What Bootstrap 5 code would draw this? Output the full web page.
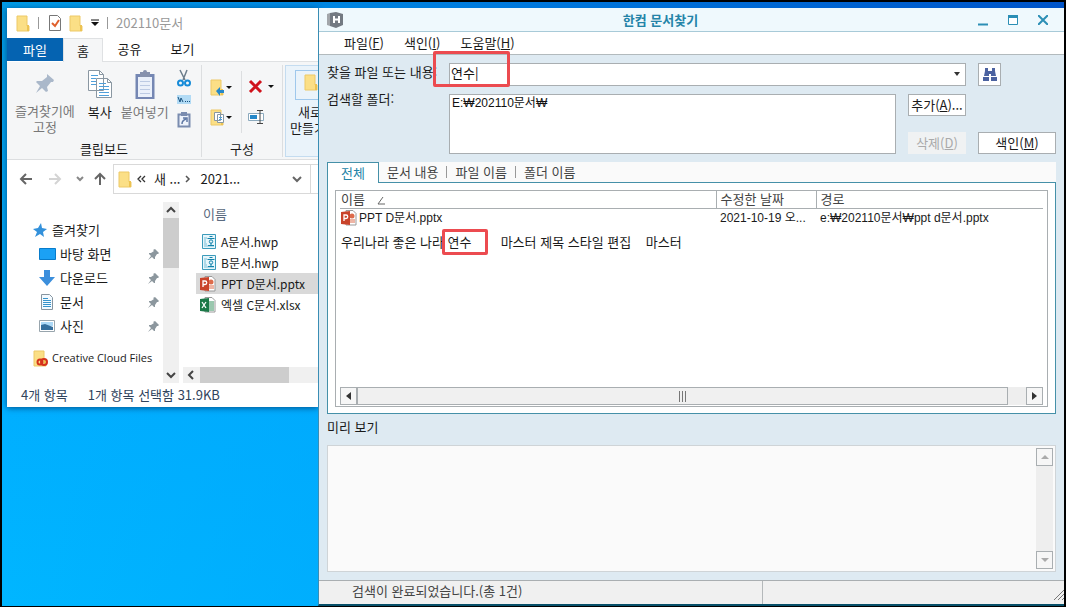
<!DOCTYPE html>
<html lang="ko">
<head>
<meta charset="utf-8">
<meta name="viewport" content="width=device-width, initial-scale=1">
<title>한컴 문서찾기</title>
<link href="https://cdn.jsdelivr.net/npm/bootstrap@5.3.0/dist/css/bootstrap.min.css" rel="stylesheet">
<style>
body{font-family:"Noto Sans CJK KR",sans-serif;font-size:13px;line-height:16px;color:#1a1a1a}
button{font:inherit;color:inherit;background:none;border:0;padding:0}
svg{display:block;flex:none}
a{color:inherit;text-decoration:none}
.desktop{min-height:100vh;border:2px solid #000;border-bottom-width:3px;padding:6px 0 0 5px;
 background:linear-gradient(90deg,#009be6,#0078dc 50%,#0054c8) top/100% 6px no-repeat,linear-gradient(90deg,#00a8fc00,#00a8fc99 32%) no-repeat,linear-gradient(#0096dc,#00aeff 65%,#00b6ff)}
.lt{font-family:"Liberation Sans","Noto Sans CJK KR",sans-serif;font-size:12px}
/* explorer */
.explorer{flex:0 0 311px;height:399px;background:#fff;overflow:hidden;box-shadow:0 1px 6px #00508c}
.qat{height:30px;padding-left:9px;color:#999}
.vbar{width:1px;height:12px;background:#999}
.rtabs{height:24px}
.rtabs button{height:22px}
.rtabs .file{width:56px;height:23px;background:#0563b1;color:#fff}
.rtabs .home{width:40px;height:24px;background:#f5f6f7;border:1px solid #dfe1e3;border-bottom:0}
.rtabs .rest{border-bottom:1px solid #dfe1e3}
.rtabs .rest button{width:53px}
.ribbon{height:98px;background:#f5f6f7;border-bottom:1px solid #dcdee0}
.ribbon .group{border-right:1px solid #dcdee0;height:92px;margin-top:3px}
.ribbon .clip{flex:0 0 195px}
.ribbon .org{flex:0 0 81px}
.ribbon .dim{color:#777}
.orggrid{display:grid;grid-template-columns:31px 36px;grid-auto-rows:16px;row-gap:14px;padding:14px 0 0 8px;align-items:center}
.orggrid .r{border-left:1px solid #dcdee0;padding:8px 0 8px 6px;margin:-8px 0}
.newbox{border:1px solid #c4dcf0;background:#eaf3fa;width:60px;height:92px;margin:3px 0 0 2px}
.newbox span{white-space:nowrap}
.newicon{width:50px;height:30px;border:1px solid #9fc8ec;margin:4px 0 4px 9px;padding:3px 0 0 8px}
.addr{flex:none;height:30px;border:1px solid #d9d9d9;width:198px;white-space:nowrap}
.arrows{padding-left:12px}
.side{width:156px;padding:16px 4px 0 0}
.side a{height:24px}
.side .top-item{padding-left:26px}
.side .sub{padding-left:32px}
.side .cc{font-family:"Open Sans",sans-serif;font-size:11px}
.vscroll{width:16px;height:181px;background:#f0f0f0}
.vscroll i{height:50px;background:#cdcdcd}
.fhead{padding:4px 0 9px 20px;color:#5a6a80}
.files a{height:21px;white-space:nowrap;font-size:12px;padding-left:4px}
.files .rows{padding-left:13px}
.files .sel{background:#d9d9d9}
.hscroll{height:16px;background:#f0f0f0}
.hscroll i{width:89px;height:16px;background:#cdcdcd}
.estat{padding:4px 0 0 14px;color:#30435c}
/* finder */
.finder{background:#deeaf2;border-left:1px solid #3a8db4;border-bottom:2px solid #07506a;min-width:0;min-height:596px}
.titlebar{height:24px;background:#eff9fd;border-bottom:1px solid #a8cad8;color:#2484a8}
.menus{height:23px;background:#fff;border-bottom:1px solid #b2babd;padding-left:25px;gap:20px}
.form{display:grid;grid-template-columns:122px 1fr 58px 90px;padding:8px 8px 0}
.form .row2{margin-top:8px}
.form label{padding-top:1px}
.form .lab2{padding-top:5px}
.bx{background:#fff;border:1px solid #a9aeb1;border-radius:0}
.b22{height:22px}
.off{background:#f0f2f3}
.off:disabled{color:#aaa}
.wide{grid-column:2/4}
.cmb{height:23px;position:relative}
.cmb input{border:0;outline:0;background:none;width:95%;padding:0 0 4px 1px;color:#111}
.findbtn{width:23px}
textarea.bx{height:60px;resize:none;outline:0;padding:0 2px;line-height:16px;color:#111;display:block;overflow:hidden}
.ring{position:absolute;border:3px solid #ec4b50;border-radius:2px;pointer-events:none}
.ring1{left:-17px;top:-13px;width:77px;height:36px}
.ring2{left:-6px;top:-3px;width:46px;height:26px}
.tabstrip{height:21px;background:#fafafa;color:#444}
.tabstrip .fill{border-bottom:1px solid #4590a8}
.tabstrip .on{width:52px;border:1px solid #4590a8;border-bottom:0;background:#fff;color:#2484a8}
.pane{background:#fff;border:1px solid #4590a8;border-top:0;padding:7px;height:231px}
.list{border:1px solid #a9aeb1;height:217px;padding:0 4px 1px}
.list table{width:100%;table-layout:fixed;white-space:nowrap}
.c1{width:376px}.c2{width:100px}
.list th{font-weight:400;color:#444;height:17px;padding:0 0 0 4px;border-bottom:1px solid #a9aeb1}
.list th+th{border-left:1px solid #a9aeb1}
.list td{height:20px;padding:0 0 0 4px}
.list tr>:first-child{padding-left:1px}
.list .snip td{height:28px;white-space:pre}
.sb{height:18px;background:#eee}
.sb button,.pv button{width:17px;height:18px;border:1px solid #a9aeb1;background:#f6f6f6}
.thumb{flex:1;border:1px solid #a9aeb1;margin-right:18px;background:#f0f0f0}
.plabel{padding:5px 0 10px}
.preview{min-height:127px;background:#fafafa;border:1px solid #cfd4d7;padding:2px}
.pv{background:#eee}
.status{height:24px;background:#f0f0f0;border-top:1px solid #a9aeb1;color:#444}
.status span{width:444px;padding:2px 0 0 33px;border-right:1px solid #b4b8ba}
</style>
</head>
<body>
<svg width="0" height="0" class="position-absolute">
<defs>
<g id="folder"><path d="M1 1h10v10h2v5H1z" fill="#fbdf86" stroke="#edc966"/><path d="M11 10h2v6h-2z" fill="#edc352"/></g>
<g id="pin"><path d="M7 0l4 4-1 1-1 0-2 3v2l-1 0-2-2-4 3 3-4-2-2V4h2l3-2-1-1z" fill="#8c979e"/></g>
<g id="hwp"><path d="M.5.5h13v14H.5z" fill="#e7f6fb" stroke="#3c9bbb"/><path d="M2 4h3M2 6h2M2 8h2M2 10h3M2 12h10" stroke="#77bdd6"/><path d="M7.500 2.500h3M5.500 4.500h7" stroke="#1282ab"/><circle cx="9" cy="7.500" r="1.700" fill="none" stroke="#1282ab"/><path d="M9 9v2M6 11.500h6" stroke="#1282ab"/></g>
<g id="ppt"><path d="M5 .5h7l3 3V15H5z" fill="#fff" stroke="#999"/><circle cx="11" cy="6" r="2.500" fill="#dd6b4b"/><path d="M9 10h5M9 12h5" stroke="#dd6b4b"/><path d="M0 2l9-1v14l-9-1z" fill="#c9432a"/><path d="M3 11V5h2a1.500 1.500 0 010 3.500H3" fill="none" stroke="#fff" stroke-width="1.300"/></g>
</defs></svg>
<main class="desktop d-flex align-items-start">
<section class="explorer d-flex flex-column" aria-label="202110문서">
 <div class="qat d-flex align-items-center">
  <svg width="14" height="17"><use href="#folder"/></svg><span class="vbar ms-2"></span>
  <svg class="ms-2 me-1" width="18" height="17"><path d="M2.500.5h8l3 3v12h-11z" fill="#fff" stroke="#777"/><path d="M5 8l3 3 4-6" fill="none" stroke="#e0602c" stroke-width="2"/></svg>
  <svg width="14" height="17"><use href="#folder"/></svg>
  <svg class="ms-2 me-2" width="8" height="8"><path d="M0 1h8" stroke="#111"/><path d="M0 3h8L4 7z" fill="#111"/></svg>
  <span class="vbar me-2"></span><span>202110문서</span>
 </div>
 <div class="rtabs d-flex"><button class="file">파일</button><button class="home">홈</button><div class="rest flex-fill"><button>공유</button><button>보기</button></div></div>
 <div class="ribbon d-flex">
  <div class="group clip d-flex flex-column justify-content-between">
   <div class="d-flex text-center">
    <button class="dim ms-2 pt-2"><svg class="mx-auto mb-2" width="22" height="22" viewBox="0 0 22 22"><path d="M13 1l7 6-1 2-2 0-4 5 1 4-2 1-4-4-6 5 4-7-4-4 1-1 5 0 5-4z" fill="#aab8ca"/></svg>즐겨찾기에<br>고정</button>
    <button class="d-flex flex-column align-items-center pt-1 ms-2 ps-1"><svg class="mb-1" width="26" height="31"><path d="M1.500 1.500h11l4 4v16h-15zM9.500 9.500h11l4 4v15h-15z" fill="#fff" stroke="#8a97a2"/><path d="M12.500 1.500v4h4M20.500 9.500v4h4" fill="none" stroke="#8a97a2"/><path d="M4 6.500h7M4 9.500h5M4 12.500h5M4 15.500h5M12 14.500h7M12 17.500h10M12 20.500h10M12 23.500h10M12 26.500h10" stroke="#4f9fda"/></svg>복사</button>
    <button class="dim d-flex flex-column align-items-center pt-1 ms-2"><svg class="mb-1" width="22" height="31"><rect x="1.500" y="5" width="19" height="25" fill="#7587b3"/><path d="M4 8h14v20H4z" fill="#eaf0fa"/><path d="M6 3h10v5H6z" fill="#8792ad"/><circle cx="11" cy="3" r="2" fill="#8792ad"/><path d="M6 12.500h10M6 16.500h10M6 20.500h10M6 24.500h10" stroke="#bccae3"/></svg>붙여넣기</button>
    <div class="d-flex flex-column align-items-center ms-2 gap-2 pt-1">
     <svg width="14" height="18"><path d="M3 1l5 10M10 1L6 11" stroke="#6b7d8c" stroke-width="1.500"/><circle cx="3.500" cy="14" r="2.500" fill="none" stroke="#168bd8" stroke-width="2"/><circle cx="10.500" cy="14" r="2.500" fill="none" stroke="#168bd8" stroke-width="2"/></svg>
     <svg width="14" height="9"><path d="M0 0h14v9H0z" fill="#b2dbf5"/><path d="M1 2l2 5 1-4 2 4M8 6.500h1M10 6.500h1M12 6.500h1" fill="none" stroke="#195280"/></svg>
     <svg width="14" height="16"><path d="M1.500 2.500h11v12h-11z" fill="#eef3fb" stroke="#7a8caf" stroke-width="2"/><path d="M4 0h6v4H4z" fill="#7a8caf"/><path d="M5 12c0-3 1-4 4-5M6 6h4v4" fill="none" stroke="#6079a5" stroke-width="1.500"/></svg>
    </div>
   </div><div class="text-center">클립보드</div>
  </div>
  <div class="group org d-flex flex-column justify-content-between">
   <div class="orggrid">
    <svg width="24" height="17"><use href="#folder"/><path d="M6 12l4-4v3h4v3h-4v3z" fill="#2688c9"/><path d="M16 7h6l-3 3z" fill="#111"/></svg>
    <div class="r"><svg width="28" height="16"><path d="M2 2l11 11M13 2L2 13" stroke="#d0121b" stroke-width="3"/><path d="M20 6h6l-3 3z" fill="#111"/></svg></div>
    <svg width="24" height="17"><use href="#folder"/><path d="M4.500 3.500h6v8h-6zM7.500 5.500h6v8h-6z" fill="#fff" stroke="#8797a2"/><path d="M9 8.500h3M9 10.500h3" stroke="#4f9fda"/><path d="M16 7h6l-3 3z" fill="#111"/></svg>
    <div class="r"><svg width="18" height="16"><path d="M.5 4.500h15v7H.5z" fill="#fff" stroke="#8ba9bd"/><path d="M2 6h7v4H2z" fill="#2688c9"/><path d="M9 1.500h6M12 1.500v13M9 14.500h6" stroke="#444"/></svg></div>
   </div><div class="text-center">구성</div>
  </div>
  <div class="newbox"><div class="newicon"><svg width="14" height="17"><use href="#folder"/></svg></div><span class="d-block ps-2 ms-1">새로</span><span class="d-block ps-1">만들기</span></div>
 </div>
 <div class="arrows d-flex align-items-center mt-1">
  <svg width="94" height="16" fill="none" stroke-width="2"><path d="M13 8H2M7 3L2 8l5 5" stroke="#666"/><path d="M30 8h11M36 3l5 5-5 5" stroke="#d4d4d4"/><path d="M58 6l3 3 3-3" stroke="#888"/><path d="M81 14V3M76 8l5-5 5 5" stroke="#666"/></svg>
  <div class="addr d-flex align-items-center ps-1"><svg width="14" height="17"><use href="#folder"/></svg><svg class="ms-1" width="10" height="9"><path d="M5 1L2 4l3 3M9 1L6 4l3 3" fill="none" stroke="#333" stroke-width="1.300"/></svg><span class="ms-2">새 ...</span><svg class="ms-1 me-2" width="8" height="8"><path d="M2 1l3 3-3 3" fill="none" stroke="#555" stroke-width="1.500"/></svg><span>2021...</span><svg class="ms-auto me-2" width="10" height="8"><path d="M1 2l4 4 4-4" fill="none" stroke="#666" stroke-width="2"/></svg></div>
  <span class="addr border-start-0"></span>
 </div>
 <div class="d-flex pt-2">
  <nav class="side">
   <a href="#" class="top-item d-flex align-items-center gap-1"><svg width="15" height="14"><path d="M8 0l1 5 5 1-4 3 1 5-4-3-5 3 2-5-4-3 5-1z" fill="#3391db"/></svg>즐겨찾기</a>
   <a href="#" class="sub d-flex align-items-center"><svg class="me-1" width="17" height="12"><path d="M.5.5h16v11H.5z" fill="#1ba1f5" stroke="#087ccb"/></svg>바탕 화면<svg class="ms-auto" width="11" height="11"><use href="#pin"/></svg></a>
   <a href="#" class="sub d-flex align-items-center"><svg class="me-1" width="17" height="16"><path d="M5 0h6v7h5l-8 9-8-9h5z" fill="#3c8fdc"/></svg>다운로드<svg class="ms-auto" width="11" height="11"><use href="#pin"/></svg></a>
   <a href="#" class="sub d-flex align-items-center"><svg class="me-1" width="17" height="16"><path d="M2.500.5h8l3 3v12h-11z" fill="#f3faff" stroke="#8795a0"/><path d="M4 4.500h5M4 6.500h8M4 8.500h8M4 10.500h8M4 12.500h8" stroke="#3693cb"/></svg>문서<svg class="ms-auto" width="11" height="11"><use href="#pin"/></svg></a>
   <a href="#" class="sub d-flex align-items-center"><svg class="me-1" width="17" height="12"><path d="M.5.5h15v11H.5z" fill="#fff" stroke="#98a5ad"/><path d="M2 2h12v4H2z" fill="#acd9f7"/><path d="M2 5l4-1 8 3v3H2z" fill="#356f9d"/></svg>사진<svg class="ms-auto" width="11" height="11"><use href="#pin"/></svg></a>
   <a href="#" class="top-item d-flex align-items-center mt-2 text-nowrap"><svg width="15" height="17" class="me-1"><use href="#folder"/><circle cx="7" cy="12" r="2.500" fill="none" stroke="#d5321c" stroke-width="2"/><circle cx="11" cy="12" r="3" fill="none" stroke="#d5321c" stroke-width="2"/></svg><span class="cc">Creative Cloud Files</span></a>
  </nav>
  <div class="vscroll d-flex flex-column align-items-center"><svg width="16" height="16"><path d="M4 10l4-4 4 4" fill="none" stroke="#444" stroke-width="2"/></svg><i class="w-100"></i><svg class="mt-auto" width="16" height="16"><path d="M4 6l4 4 4-4" fill="none" stroke="#444" stroke-width="2"/></svg></div>
  <div class="files flex-fill d-flex flex-column ps-1 overflow-hidden">
   <div class="fhead">이름</div>
   <div class="rows"><a href="#" class="d-flex align-items-center"><svg class="me-1" width="17" height="16"><use href="#hwp" x="2"/></svg>A문서.hwp</a>
   <a href="#" class="d-flex align-items-center"><svg class="me-1" width="17" height="16"><use href="#hwp" x="2"/></svg>B문서.hwp</a>
   <a href="#" class="d-flex align-items-center sel"><svg class="me-1" width="17" height="16"><use href="#ppt"/></svg>PPT D문서.pptx</a>
   <a href="#" class="d-flex align-items-center"><svg class="me-1" width="17" height="16"><path d="M5 .5h7l3 3V15H5z" fill="#fff" stroke="#999"/><path d="M9 5h5M9 7h5M9 9h5M9 11h5M9 13h5" stroke="#36905f"/><path d="M0 2l9-1v14l-9-1z" fill="#1c7948"/><path d="M2 5l4 6M6 5l-4 6" stroke="#fff" stroke-width="1.300"/></svg>엑셀 C문서.xlsx</a></div>
   <div class="hscroll d-flex mt-auto"><svg width="17" height="16"><path d="M10 4L6 8l4 4" fill="none" stroke="#444" stroke-width="2"/></svg><i></i></div>
  </div>
 </div>
 <div class="estat d-flex gap-3"><span>4개 항목</span><span class="ms-1">1개 항목 선택함 31.9KB</span></div>
</section>

<section class="finder flex-fill" aria-label="한컴 문서찾기">
 <header class="titlebar d-flex align-items-center px-2">
  <svg width="16" height="16"><path d="M0 2l3-1v13l-3-1z" fill="#a2a6aa"/><path d="M3 1l6-1 7 2v11l-7 3-6-2z" fill="#737a82"/><path d="M7 4v7M12 4v7M7 7.500h5" stroke="#fff" stroke-width="2"/></svg>
  <strong class="mx-auto">한컴 문서찾기</strong>
  <button aria-label="최소화"><svg width="10" height="14"><path d="M0 11.500h10" stroke="#2c8fb5" stroke-width="2"/></svg></button>
  <button class="mx-3 px-1" aria-label="최대화"><svg width="10" height="10"><path d="M.5.5h9v9h-9z" fill="#fff" stroke="#2c8fb5"/><path d="M0 1.500h10" stroke="#2c8fb5" stroke-width="3"/></svg></button>
  <button aria-label="닫기" class="me-1 pe-1"><svg width="10" height="10"><path d="M0 0l10 10M10 0L0 10" stroke="#2c8fb5" stroke-width="2"/></svg></button>
 </header>
 <nav class="menus d-flex align-items-center"><button>파일(<u>F</u>)</button><button>색인(<u>I</u>)</button><button>도움말(<u>H</u>)</button></nav>
 <form class="form" onsubmit="return false">
  <label for="q" class="text-nowrap">찾을 파일 또는 내용:</label>
  <div class="d-flex wide"><div class="bx cmb flex-fill d-flex align-items-center justify-content-between"><input id="q" value="연수|"><svg class="me-1" width="7" height="5"><path d="M0 0h6L3 4z" fill="#333"/></svg><span class="ring ring1"></span></div></div>
  <div class="ps-2 ms-1"><button class="bx cmb findbtn d-flex align-items-center justify-content-center" aria-label="찾기"><svg width="14" height="14"><path d="M2 0h3v3h4V0h3v3l1 5H8V6H6v2H1l1-5z" fill="#4b62a0"/><path d="M0 9h6v4H0zM8 9h6v4H8z" fill="#4b62a0"/></svg></button></div>
  <label for="dir" class="lab2">검색할 폴더:</label>
  <div class="row2 pe-2 me-1"><textarea id="dir" class="bx lt w-100">E:₩202110문서₩</textarea></div>
  <div class="row2 d-flex flex-column justify-content-between"><button class="bx b22">추가(<u>A</u>)...</button><button class="b22 off" disabled>삭제(<u>D</u>)</button></div>
  <div class="row2 d-flex align-items-end ps-2 ms-1"><button class="bx b22 w-100">색인(<u>M</u>)</button></div>
 </form>
 <div class="mx-2 mt-2">
  <div class="tabstrip d-flex"><button class="on">전체</button><div class="fill flex-fill d-flex align-items-center ps-2 gap-2"><button>문서 내용</button><span class="vbar"></span><button>파일 이름</button><span class="vbar"></span><button>폴더 이름</button></div></div>
  <div class="pane"><div class="list d-flex flex-column">
   <table><colgroup><col class="c1"><col class="c2"><col></colgroup>
   <thead><tr><th>이름 <svg class="d-inline-block ms-2" width="8" height="8"><path d="M6 0L1 7h7" fill="none" stroke="#666"/></svg></th><th>수정한 날짜</th><th>경로</th></tr></thead>
   <tbody><tr><td><span class="d-flex align-items-center"><svg width="18" height="16"><use href="#ppt"/></svg><span class="lt">PPT D문서.pptx</span></span></td><td class="lt">2021-10-19 오...</td><td class="lt">e:₩202110문서₩ppt d문서.pptx</td></tr>
   <tr class="snip"><td colspan="3">우리나라 좋은 나라 <span class="position-relative">연수<span class="ring ring2"></span></span>        마스터 제목 스타일 편집    마스터</td></tr></tbody></table>
   <div class="sb d-flex mt-auto"><button aria-label="왼쪽"><svg class="mx-auto" width="5" height="8"><path d="M5 0v8L0 4z" fill="#333"/></svg></button><div class="thumb d-flex align-items-center justify-content-center"><svg width="10" height="11"><path d="M1.500 0v11M4.500 0v11M7.500 0v11" stroke="#777"/></svg></div><button aria-label="오른쪽"><svg class="mx-auto" width="5" height="8"><path d="M0 0v8l5-4z" fill="#333"/></svg></button></div>
  </div></div>
  <div class="plabel">미리 보기</div>
  <div class="preview d-flex justify-content-end"><div class="pv d-flex flex-column justify-content-between"><button aria-label="위"><svg class="mx-auto" width="8" height="4"><path d="M0 4h8L4 0z" fill="#aaa"/></svg></button><button aria-label="아래"><svg class="mx-auto" width="8" height="4"><path d="M0 0h8L4 4z" fill="#aaa"/></svg></button></div></div>
 </div>
 <footer class="status d-flex mt-2"><span>검색이 완료되었습니다.(총 1건)</span><svg class="ms-auto mt-auto mb-1" width="10" height="10"><path d="M0 10L10 0M4 10l6-6M8 10l2-2" stroke="#777"/></svg></footer>
</section>
</main>
<script src="https://cdn.jsdelivr.net/npm/bootstrap@5.3.0/dist/js/bootstrap.bundle.min.js"></script>
</body>
</html>
